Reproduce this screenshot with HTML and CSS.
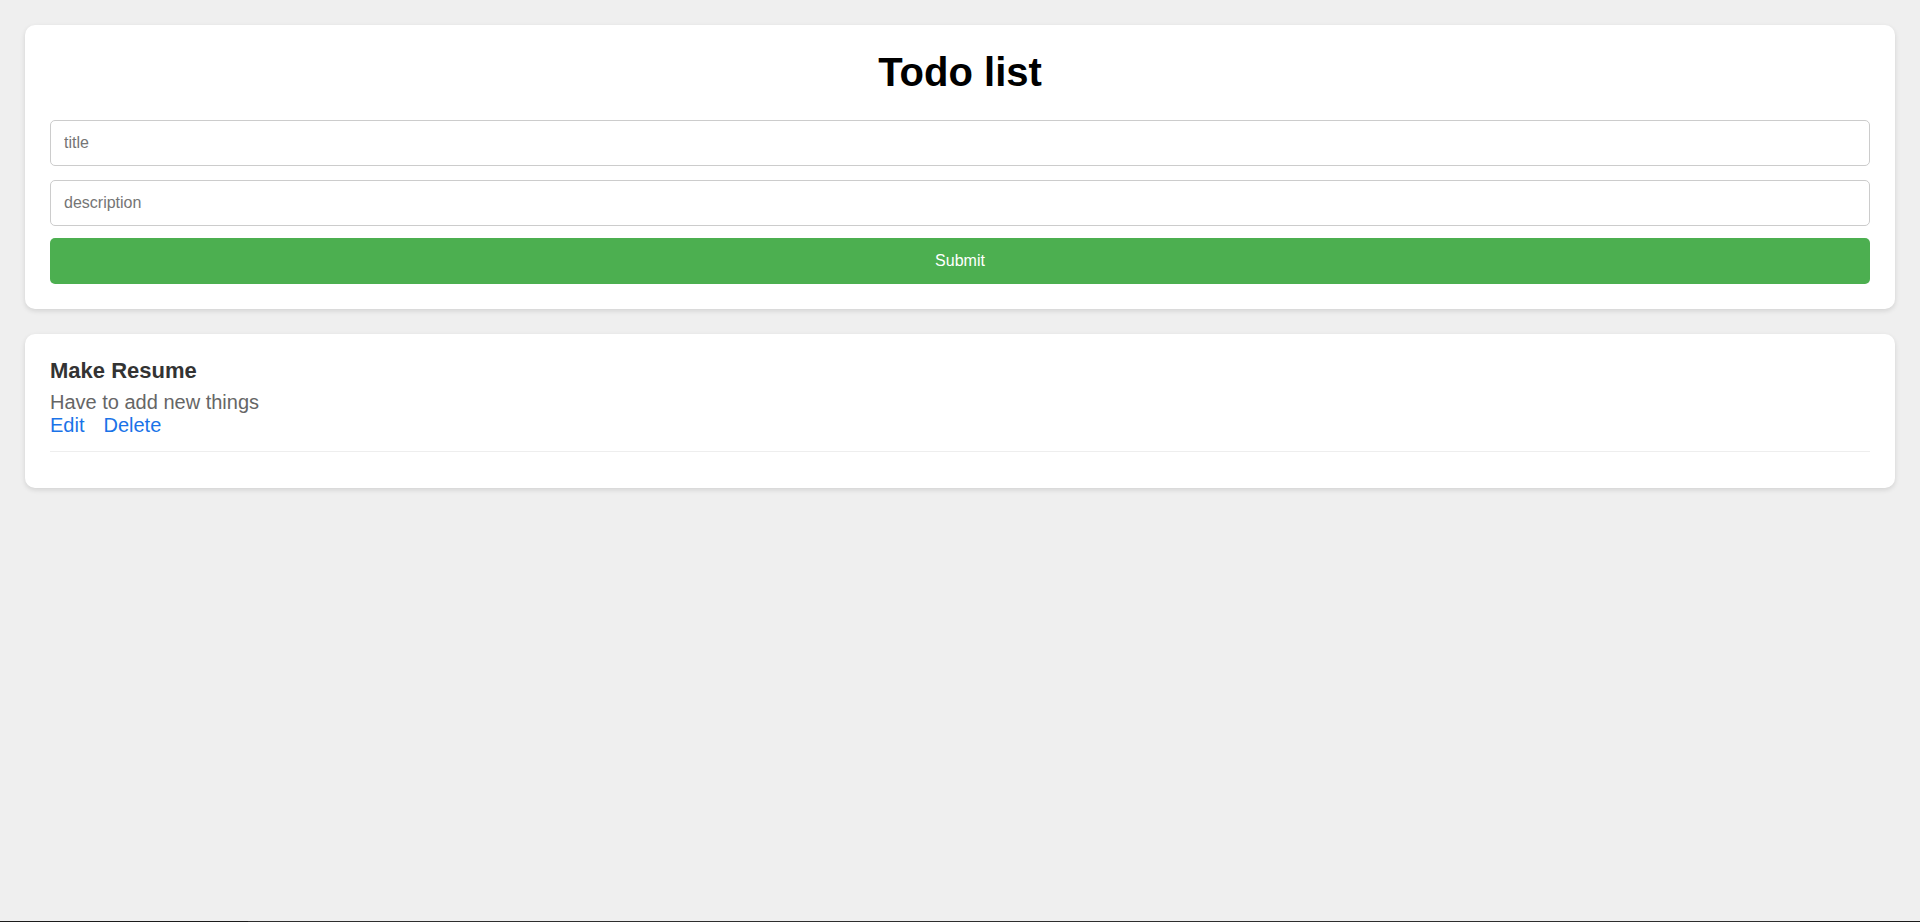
FILE: index.html
```html
<!DOCTYPE html>
<html lang="en">
<head>
<meta charset="utf-8">
<title>Todo list</title>
<link rel="stylesheet" href="styles.css">
</head>
<body>
<main class="page">
  <section class="card form-card">
    <h1 class="heading">Todo list</h1>
    <form class="todo-form">
      <input class="field" type="text" placeholder="title">
      <input class="field" type="text" placeholder="description">
      <button class="submit" type="button">Submit</button>
    </form>
  </section>
  <section class="card list-card">
    <div class="todo-item">
      <h3 class="todo-title">Make Resume</h3>
      <p class="todo-desc">Have to add new things</p>
      <div class="todo-actions">
        <a class="action" href="#">Edit</a>
        <a class="action" href="#">Delete</a>
      </div>
    </div>
  </section>
</main>
<div class="bottom-strip"></div>
</body>
</html>
```
FILE: styles.css
```css
* { box-sizing: border-box; }
html, body { height: 100%; }
body {
  margin: 0;
  background: #efefef;
  font-family: "Liberation Sans", Arial, sans-serif;
  display: flex;
  flex-direction: column;
}
.page {
  padding: 25px;
  display: flex;
  flex-direction: column;
  gap: 25px;
  flex: 1;
}
.card {
  background: #fff;
  border-radius: 10px;
  box-shadow: 0 2px 5px rgba(0,0,0,0.12);
  padding: 25px;
}
.heading {
  margin: 0 0 25px;
  text-align: center;
  font-size: 40px;
  font-weight: bold;
  color: #000;
  line-height: 45px;
}
.todo-form {
  display: flex;
  flex-direction: column;
}
.field {
  height: 46px;
  border: 1px solid #ccc;
  border-radius: 5px;
  padding: 0 13px;
  font-family: "Liberation Sans", Arial, sans-serif;
  font-size: 16px;
  color: #333;
  margin-bottom: 14px;
}
.field:nth-of-type(2) { margin-bottom: 12px; }
.field::placeholder { color: #757575; }
.submit {
  height: 46px;
  border: none;
  border-radius: 5px;
  background: #4caf50;
  color: #fff;
  font-family: "Liberation Sans", Arial, sans-serif;
  font-size: 16px;
}
.list-card {
  padding: 24px 25px 36px;
}
.todo-item {
  border-bottom: 1px solid #eee;
  padding-bottom: 14px;
}
.todo-title {
  margin: 0 0 7px;
  font-size: 22px;
  font-weight: bold;
  color: #333;
}
.todo-desc {
  margin: 0;
  font-size: 20px;
  color: #666;
}
.todo-actions {
  display: flex;
  gap: 19px;
}
.action {
  font-size: 20px;
  color: #1a73e8;
  text-decoration: none;
}
.bottom-strip {
  height: 1px;
  flex: none;
  background: linear-gradient(to right, #1b1b1b 0 248px, #2e2e2e 248px 1800px, #1b1b1b 1800px);
}
```
